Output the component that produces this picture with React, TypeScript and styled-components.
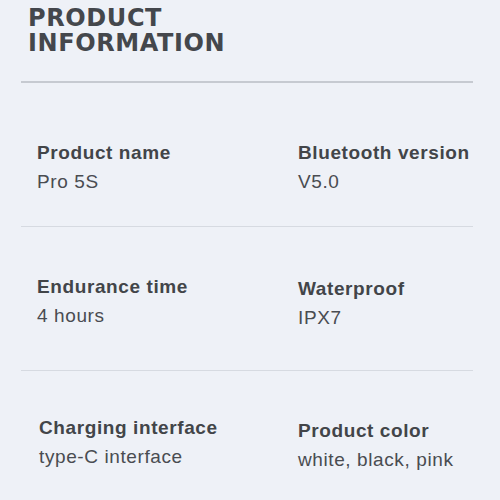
import React from 'react';
import styled, { createGlobalStyle } from 'styled-components';

const GlobalStyle = createGlobalStyle`
  html, body {
    margin: 0;
    padding: 0;
    background: #eef1f7;
  }
  body {
    width: 500px;
    height: 500px;
    overflow: hidden;
  }
`;

const Page = styled.div`
  width: 500px;
  height: 500px;
  box-sizing: border-box;
  padding: 0 27px 0 21px;
  background: #eef1f7;
`;

const Header = styled.header`
  padding: 6px 0 0 7px;
  height: 83px;
  box-sizing: border-box;
  border-bottom: 2px solid #c6cad1;
`;

const Title = styled.h1`
  margin: 0;
  font-family: 'DejaVu Sans', sans-serif;
  font-weight: 700;
  font-size: 24px;
  line-height: 25px;
  letter-spacing: 0.6px;
  color: #44474c;
`;

const Row = styled.section<{ $top: number; $bottom: number; $last?: boolean }>`
  display: grid;
  grid-template-columns: 261px 1fr;
  padding: ${p => p.$top}px 0 ${p => p.$bottom}px 16px;
  border-bottom: ${p => (p.$last ? 'none' : '1px solid #d6dae1')};
`;

const Cell = styled.div<{ $dx?: number; $dy?: number }>`
  display: flex;
  flex-direction: column;
  gap: 7px;
  padding-left: ${p => p.$dx ?? 0}px;
  padding-top: ${p => p.$dy ?? 0}px;
`;

const Label = styled.div`
  font-family: 'Liberation Sans', Arial, sans-serif;
  font-weight: 700;
  font-size: 19px;
  line-height: 22px;
  letter-spacing: 0.6px;
  color: #424549;
  white-space: nowrap;
`;

const Value = styled.div`
  font-family: 'Liberation Sans', Arial, sans-serif;
  font-size: 19px;
  line-height: 22px;
  letter-spacing: 0.6px;
  color: #494c51;
  white-space: nowrap;
`;

interface Spec {
  label: string;
  value: string;
  dx?: number;
  dy?: number;
}

const rows: { top: number; bottom: number; items: Spec[] }[] = [
  {
    top: 59,
    bottom: 33,
    items: [
      { label: 'Product name', value: 'Pro 5S' },
      { label: 'Bluetooth version', value: 'V5.0' },
    ],
  },
  {
    top: 49,
    bottom: 41,
    items: [
      { label: 'Endurance time', value: '4 hours' },
      { label: 'Waterproof', value: 'IPX7', dy: 2 },
    ],
  },
  {
    top: 46,
    bottom: 20,
    items: [
      { label: 'Charging interface', value: 'type-C interface', dx: 2 },
      { label: 'Product color', value: 'white, black, pink', dy: 3 },
    ],
  },
];

export default function App() {
  return (
    <Page>
      <GlobalStyle />
      <Header>
        <Title>
          PRODUCT
          <br />
          INFORMATION
        </Title>
      </Header>
      {rows.map((row, i) => (
        <Row key={i} $top={row.top} $bottom={row.bottom} $last={i === rows.length - 1}>
          {row.items.map(item => (
            <Cell key={item.label} $dx={item.dx} $dy={item.dy}>
              <Label>{item.label}</Label>
              <Value>{item.value}</Value>
            </Cell>
          ))}
        </Row>
      ))}
    </Page>
  );
}
